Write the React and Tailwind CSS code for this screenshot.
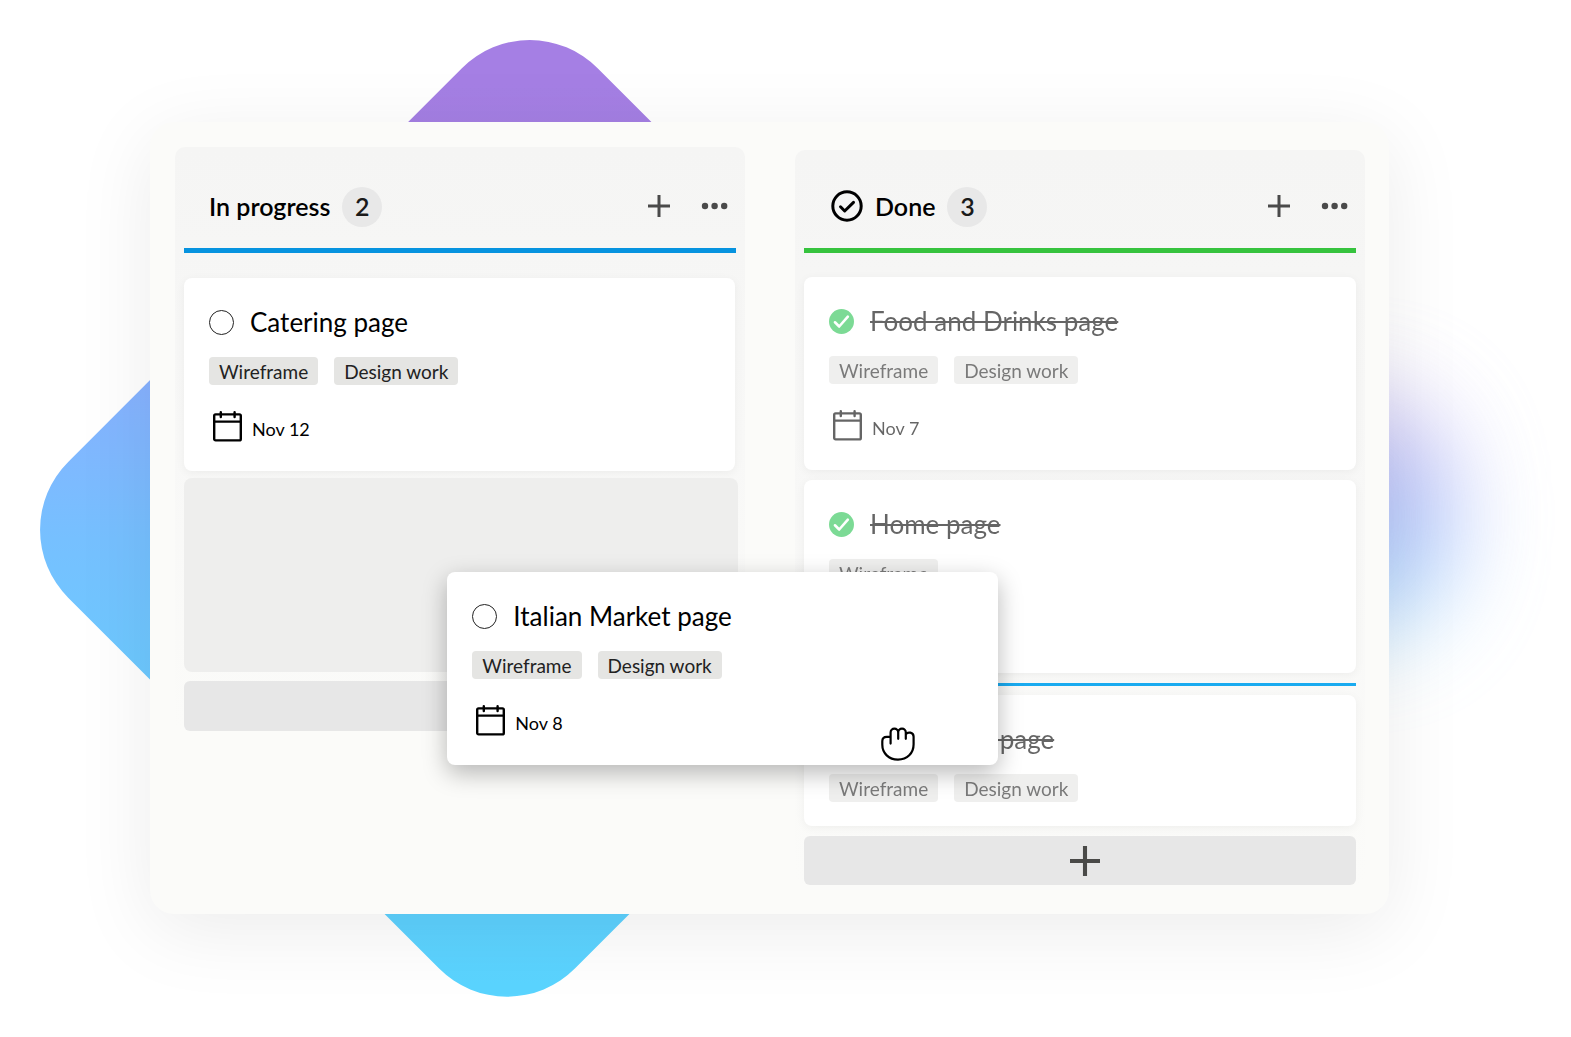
import { useState } from "react";

function Plus({ className }) {
  return (
    <svg className={className} viewBox="0 0 22 22" fill="none" stroke="currentColor" strokeWidth="3">
      <path d="M11 0v22M0 11h22" />
    </svg>
  );
}

function Dots() {
  return (
    <svg className="h-6 w-7" viewBox="0 0 28 24" fill="currentColor">
      <circle cx="4" cy="12" r="3.2" />
      <circle cx="13.6" cy="12" r="3.2" />
      <circle cx="23.2" cy="12" r="3.2" />
    </svg>
  );
}

function CheckCircle() {
  return (
    <svg className="mr-3 ml-0.5 h-8 w-8 overflow-visible" viewBox="0 0 32 32" fill="none" stroke="currentColor" strokeLinecap="round" strokeLinejoin="round">
      <circle cx="16" cy="15" r="14.2" strokeWidth="3" />
      <path d="M9.5 15.8l4.2 4.2l8.8-8.6" strokeWidth="3" />
    </svg>
  );
}

function Calendar() {
  return (
    <svg className="h-[31px] w-[31px]" viewBox="0 0 31 31" fill="none" stroke="currentColor" strokeWidth="2.4" strokeLinecap="round">
      <rect x="2.2" y="3.4" width="26.6" height="26" rx="1.4" />
      <path d="M2.2 10.6h26.6" />
      <path d="M8.8 1.2v4.8M22.6 1.2v4.8" />
    </svg>
  );
}

function Hand({ className }) {
  return (
    <svg className={className} viewBox="0 0 34 34" fill="none" stroke="currentColor" strokeWidth="2.2" strokeLinecap="round" strokeLinejoin="round">
      <path d="M9.6 16.6V5.4a3.8 3.8 0 0 1 7.6 0v6.4V5.4a3.8 3.8 0 0 1 7.6 0v6.4V7.4c1.8-3 7.8-2.4 7.8 2.4v7.4c0 9-6.4 15.4-15.6 15.4S1.3 26.2 1.3 17.8v-3.6c0-3 2-4.4 4.5-4.4h3.6" />
    </svg>
  );
}

/* FORMES DE FOND */
function Backdrop() {
  return (
    <div aria-hidden="true">
      <svg className="absolute left-0 top-0" width="1040" height="1037" viewBox="0 0 1040 1037">
        <defs>
          <linearGradient id="diamond" gradientUnits="userSpaceOnUse" x1="0" y1="0" x2="0" y2="1037" gradientTransform="rotate(-45)">
            <stop offset="0.08" stopColor="#a57fe4" />
            <stop offset="0.18" stopColor="#a27ee2" />
            <stop offset="0.37" stopColor="#87b2ff" />
            <stop offset="0.52" stopColor="#76c0ff" />
            <stop offset="0.66" stopColor="#6ccaff" />
            <stop offset="0.95" stopColor="#5ad4ff" />
          </linearGradient>
        </defs>
        <rect x="374.8" y="-374.4" width="716.6" height="748.8" rx="96" fill="url(#diamond)" transform="rotate(45)" />
      </svg>
      <div className="absolute right-[116px] top-[390px] h-[250px] w-[200px] rounded-full bg-linear-to-b from-[#cdb4ee] via-[#8fa8f8] to-[#9fe2ff] opacity-70 blur-[46px]" />
    </div>
  );
}

function Card({ title, tags, date, done = false, className = "" }) {
  const [checked, setChecked] = useState(done);

  return (
    <article className={`rounded-lg bg-white pl-[25px] pt-6 pb-6 ${className}`}>
      <div className={done ? "opacity-60" : ""}>
        <label className="flex h-10 items-center gap-4">
          <span className="grid">
            <input
              type="checkbox"
              checked={checked}
              onChange={() => setChecked(!checked)}
              className="col-start-1 row-start-1 h-[25px] w-[25px] appearance-none rounded-full border border-[#222] checked:border-0 checked:bg-[#26c350]"
            />
            {checked && (
              <svg className="pointer-events-none col-start-1 row-start-1 h-[25px] w-[25px]" viewBox="0 0 26 26" fill="none" stroke="white" strokeLinecap="round" strokeLinejoin="round">
                <path d="M6.2 13.8l4.4 4.4l9-10.2" strokeWidth="2.7" />
              </svg>
            )}
          </span>
          <span className={`whitespace-nowrap text-[26px] leading-10 text-black ${done ? "line-through decoration-2" : ""}`}>
            {title}
          </span>
        </label>
        <ul className="mt-[15px] flex gap-4">
          {tags.map((tag) => (
            <li key={tag} className="h-7 rounded bg-[#e5e5e3] px-2.5 text-[19px] leading-[30px] text-[#222]">
              {tag}
            </li>
          ))}
        </ul>
        {date && (
          <div className="mt-[26px] mb-[5px] flex items-end gap-[9px] pl-[3px] text-black">
            <Calendar />
            <time className="text-[18px] leading-[26px]">{date}</time>
          </div>
        )}
      </div>
    </article>
  );
}

function ColumnHeader({ icon, title, count, line }) {
  return (
    <header>
      <div className="flex h-10 items-center pl-[25px] pr-[7px]">
        {icon}
        <h2 className="text-[25px] font-semibold text-black">{title}</h2>
        <span className="ml-3 flex h-10 w-10 items-center justify-center rounded-full bg-[#e8e8e8] text-[25px] font-semibold text-[#1a1a1a]">
          {count}
        </span>
        <div className="ml-auto flex items-center gap-[31px] pb-0.5 text-[#4a4a4a]">
          <button type="button" aria-label="Add card">
            <Plus className="h-[22px] w-[22px]" />
          </button>
          <button type="button" aria-label="More options">
            <Dots />
          </button>
        </div>
      </div>
      <div className={`mt-[21px] h-[5px] ${line}`} />
    </header>
  );
}

export default function App() {
  const cardShadow = "shadow-[0_2px_10px_rgba(0,0,0,0.05)]";

  return (
    <div className="relative min-h-screen overflow-hidden bg-white pt-[122px] pr-[182px] pb-[123px] pl-[150px] font-['Lato',sans-serif]">
      <Backdrop />

      {/* TABLEAU */}
      <main className="relative grid grid-cols-2 items-start gap-[50px] rounded-[24px] bg-[#fbfbf9] pt-[25px] pr-6 pb-[29px] pl-[25px] shadow-[0_16px_80px_rgba(0,0,0,0.08)]">

        {/* IN PROGRESS */}
        <section className="rounded-[10px] bg-linear-to-b from-[#f5f5f4] via-[#f8f8f7] to-[#fbfbf9] px-[9px] pt-10">
          <ColumnHeader title="In progress" count={2} line="bg-[#0693df]" />
          <Card
            title="Catering page"
            tags={["Wireframe", "Design work"]}
            date="Nov 12"
            className={`mt-[25px] mr-px ${cardShadow}`}
          />
          <div className="-mr-0.5 mt-[7px] h-[194px] rounded-lg bg-[#eeeeed]" />
          <button type="button" aria-label="Add card" className="mt-[9px] block h-[50px] w-full rounded-md bg-[#e7e7e7]" />
        </section>

        {/* DONE */}
        <section className="mt-[3px] rounded-[10px] bg-linear-to-b from-[#f5f5f4] via-[#f8f8f7] to-[#fbfbf9] px-[9px] pt-[37px]">
          <ColumnHeader icon={<CheckCircle />} title="Done" count={3} line="bg-[#36c33e]" />
          <Card
            done
            title="Food and Drinks page"
            tags={["Wireframe", "Design work"]}
            date="Nov 7"
            className={`mt-6 ${cardShadow}`}
          />
          <Card
            done
            title="Home page"
            tags={["Wireframe"]}
            className={`mt-2.5 min-h-[193px] ${cardShadow}`}
          />
          <div className="mt-2.5 h-[3px] bg-[#1aabf0]" />
          <Card
            done
            title="Restaurant page"
            tags={["Wireframe", "Design work"]}
            className={`mt-[9px] ${cardShadow}`}
          />
          <button type="button" aria-label="Add card" className="mt-2.5 flex h-[49px] w-full items-center justify-center rounded-md bg-[#e7e7e7] pl-2.5 text-[#4a4a48]">
            <Plus className="h-[30px] w-[30px]" />
          </button>
        </section>

        {/* CARTE DEPLACEE */}
        <div className="absolute top-[450px] left-[24%] w-[551px]">
          <Card
            title="Italian Market page"
            tags={["Wireframe", "Design work"]}
            date="Nov 8"
            className="shadow-[0_8px_24px_rgba(0,0,0,0.28)]"
          />
          <Hand className="absolute right-[83px] bottom-1 h-[34px] w-[34px]" />
        </div>
      </main>
    </div>
  );
}
